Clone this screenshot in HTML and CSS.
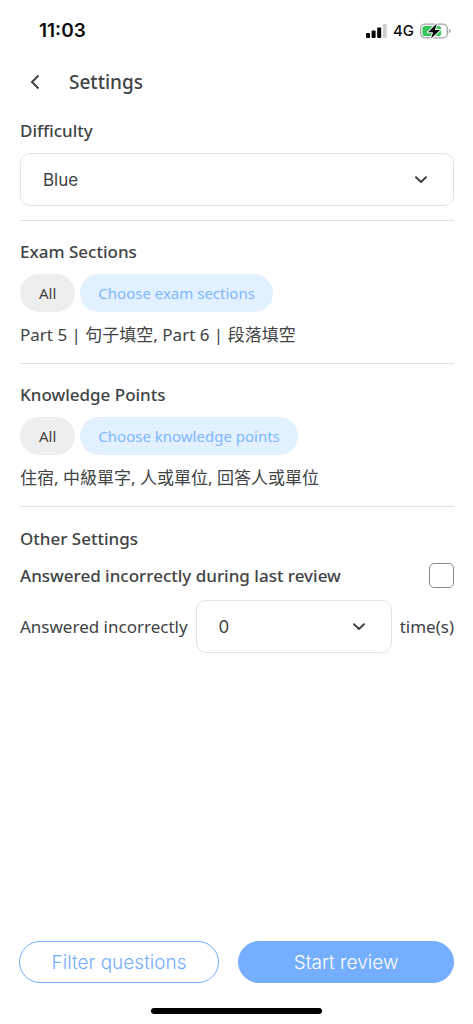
FILE: index.html
```html
<!DOCTYPE html>
<html lang="en">
<head>
<meta charset="utf-8">
<meta name="viewport" content="width=device-width, initial-scale=1">
<title>Settings</title>
<link rel="stylesheet" href="styles.css">
</head>
<body>
<div class="screen">
  <div class="status">
    <span class="clock">11:03</span>
    <div class="indicators">
      <svg class="signal" viewBox="0 0 21 14" aria-hidden="true">
        <rect x="0" y="9" width="4" height="5" rx="1"/>
        <rect x="5.6" y="6.5" width="4" height="7.500" rx="1"/>
        <rect x="11.200" y="3.500" width="4" height="10.500" rx="1"/>
        <rect class="weak" x="16.800" y="0" width="4" height="14" rx="1"/>
      </svg>
      <span class="network">4G</span>
      <svg class="battery" viewBox="0 0 31 16" aria-hidden="true">
        <rect x=".7" y="1.200" width="26.600" height="13.600" rx="4.400" fill="none" stroke="#a5a6a7" stroke-width="1.300"/>
        <path d="M28.800 5.800c1.400.5 1.700 1.300 1.700 2.200s-.3 1.700-1.700 2.200z" fill="#a0a1a2"/>
        <rect x="2.500" y="3" width="18.600" height="10" rx="2.600" fill="#35c759"/>
        <path d="M16.800.6 8 9.200h5.100L11 15.600l9-8.700h-5.100z" fill="#000" stroke="#fff" stroke-width="2" paint-order="stroke" stroke-linejoin="round"/>
      </svg>
    </div>
  </div>

  <header class="header">
    <button class="back" type="button" aria-label="Back">
      <svg viewBox="0 0 10 16" aria-hidden="true"><path d="M8.500 1.500 2 8l6.500 6.500"/></svg>
    </button>
    <h1 class="title">Settings</h1>
  </header>

  <main class="content">
    <section class="section section-first">
      <label class="heading" for="difficulty">Difficulty</label>
      <div class="picker">
        <select class="select" id="difficulty"><option>Blue</option></select>
        <svg class="chevron" viewBox="0 0 12 8" aria-hidden="true"><path d="m1 1.300 5 4.700 5-4.700"/></svg>
      </div>
    </section>

    <section class="section">
      <h2 class="heading">Exam Sections</h2>
      <div class="chips">
        <button class="chip" type="button">All</button>
        <button class="chip chip-choose" type="button">Choose exam sections</button>
      </div>
      <p class="summary" lang="zh-Hant">Part 5 | 句子填空, Part 6 | 段落填空</p>
    </section>

    <section class="section">
      <h2 class="heading">Knowledge Points</h2>
      <div class="chips">
        <button class="chip" type="button">All</button>
        <button class="chip chip-choose" type="button">Choose knowledge points</button>
      </div>
      <p class="summary" lang="zh-Hant">住宿, 中級單字, 人或單位, 回答人或單位</p>
    </section>

    <section class="section section-last">
      <h2 class="heading">Other Settings</h2>
      <div class="check-row">
        <label class="heading" for="last-review">Answered incorrectly during last review</label>
        <input class="checkbox" type="checkbox" id="last-review">
      </div>
      <div class="count-row">
        <label for="times">Answered incorrectly</label>
        <div class="picker picker-count">
          <select class="select" id="times"><option>0</option></select>
          <svg class="chevron" viewBox="0 0 12 8" aria-hidden="true"><path d="m1 1.300 5 4.700 5-4.700"/></svg>
        </div>
        <span>time(s)</span>
      </div>
    </section>
  </main>

  <footer class="footer">
    <button class="action action-filter" type="button">Filter questions</button>
    <button class="action action-start" type="button">Start review</button>
  </footer>
  <div class="home-bar"></div>
</div>
</body>
</html>
```

FILE: styles.css
```css
* {
  box-sizing: border-box;
}

body {
  margin: 0;
  background: #fff;
  color: #414345;
  font: 400 17px/24px "Noto Sans", "Noto Sans CJK TC", sans-serif;
}

button,
select {
  font: inherit;
  color: inherit;
}

button {
  border: 0;
  padding: 0;
  background: none;
  cursor: pointer;
}

.screen {
  display: flex;
  flex-direction: column;
  min-height: 100vh;
}

.status {
  display: flex;
  justify-content: space-between;
  align-items: center;
  height: 60px;
  padding: 1px 22px 0 39px;
  color: #0b0b0b;
  font-family: Inter, sans-serif;
}

.clock {
  font-size: 19px;
  font-weight: 600;
}

.indicators {
  display: flex;
  align-items: center;
  gap: 6px;
}

.signal {
  width: 21px;
  height: 14px;
}

.weak {
  fill: #cfd0d1;
}

.network {
  font-size: 15px;
  font-weight: 500;
}

.battery {
  width: 31px;
  height: 16px;
}

.header {
  display: flex;
  align-items: center;
  gap: 20px;
  height: 44px;
  padding: 0 20px;
}

.back {
  display: flex;
  justify-content: center;
  align-items: center;
  width: 29px;
  height: 44px;
}

.back svg {
  width: 10px;
  height: 16px;
}

.back path,
.chevron path {
  fill: none;
  stroke: #414345;
  stroke-width: 2;
}

.chevron path {
  stroke-linecap: round;
  stroke-linejoin: round;
}

.title {
  margin: 0;
  font-size: 19px;
  font-weight: 500;
}

.content {
  flex: 1;
  padding: 0 19px 0 20px;
}

.section {
  display: flex;
  flex-direction: column;
  gap: 10px;
  padding: 19px 0 16px;
  border-bottom: 1px solid #dfe0e1;
}

.section-first {
  padding: 15px 0 14px;
}

.section-last {
  gap: 12px;
  padding-top: 20px;
  border: 0;
}

.heading {
  margin: 0;
  font-size: 17px;
  font-weight: 500;
}

.picker {
  display: grid;
  align-items: center;
}

.picker > * {
  grid-area: 1 / 1;
}

.select {
  appearance: none;
  width: 100%;
  height: 53px;
  padding: 0 22px;
  border: 1px solid #e2e3e4;
  border-radius: 10px;
  background: #fff;
  font-family: Inter, sans-serif;
}

.chevron {
  justify-self: end;
  width: 12px;
  height: 8px;
  margin-right: 27px;
  pointer-events: none;
}

.chips {
  display: flex;
  gap: 5px;
}

.chip {
  height: 38px;
  padding: 0 19px;
  border-radius: 19px;
  background: #edeeee;
  font-size: 15px;
}

.chip-choose {
  padding: 0 18px;
  background: #e1f1ff;
  color: #82b5ff;
}

.summary {
  margin: 0;
  padding-top: 1px;
}

.check-row {
  display: flex;
  justify-content: space-between;
  align-items: center;
}

.checkbox {
  appearance: none;
  width: 25px;
  height: 25px;
  margin: 0;
  border: 1px solid #87898b;
  border-radius: 5px;
}

.count-row {
  display: flex;
  align-items: center;
  gap: 8px;
}

.picker-count {
  flex: 1;
}

.footer {
  display: flex;
  gap: 19px;
  padding: 0 19px;
}

.action {
  flex: 1 1 0;
  height: 42px;
  padding-top: 1px;
  border: 1px solid #75aeff;
  border-radius: 21px;
  font-family: Inter, sans-serif;
  font-size: 19px;
  font-weight: 300;
}

.action-filter {
  color: #75aeff;
}

.action-start {
  flex-grow: 1.08;
  background: #75aeff;
  color: #fff;
}

.home-bar {
  width: 36%;
  height: 6px;
  margin: 25px auto 10px;
  border-radius: 3px;
  background: #000;
}
```
